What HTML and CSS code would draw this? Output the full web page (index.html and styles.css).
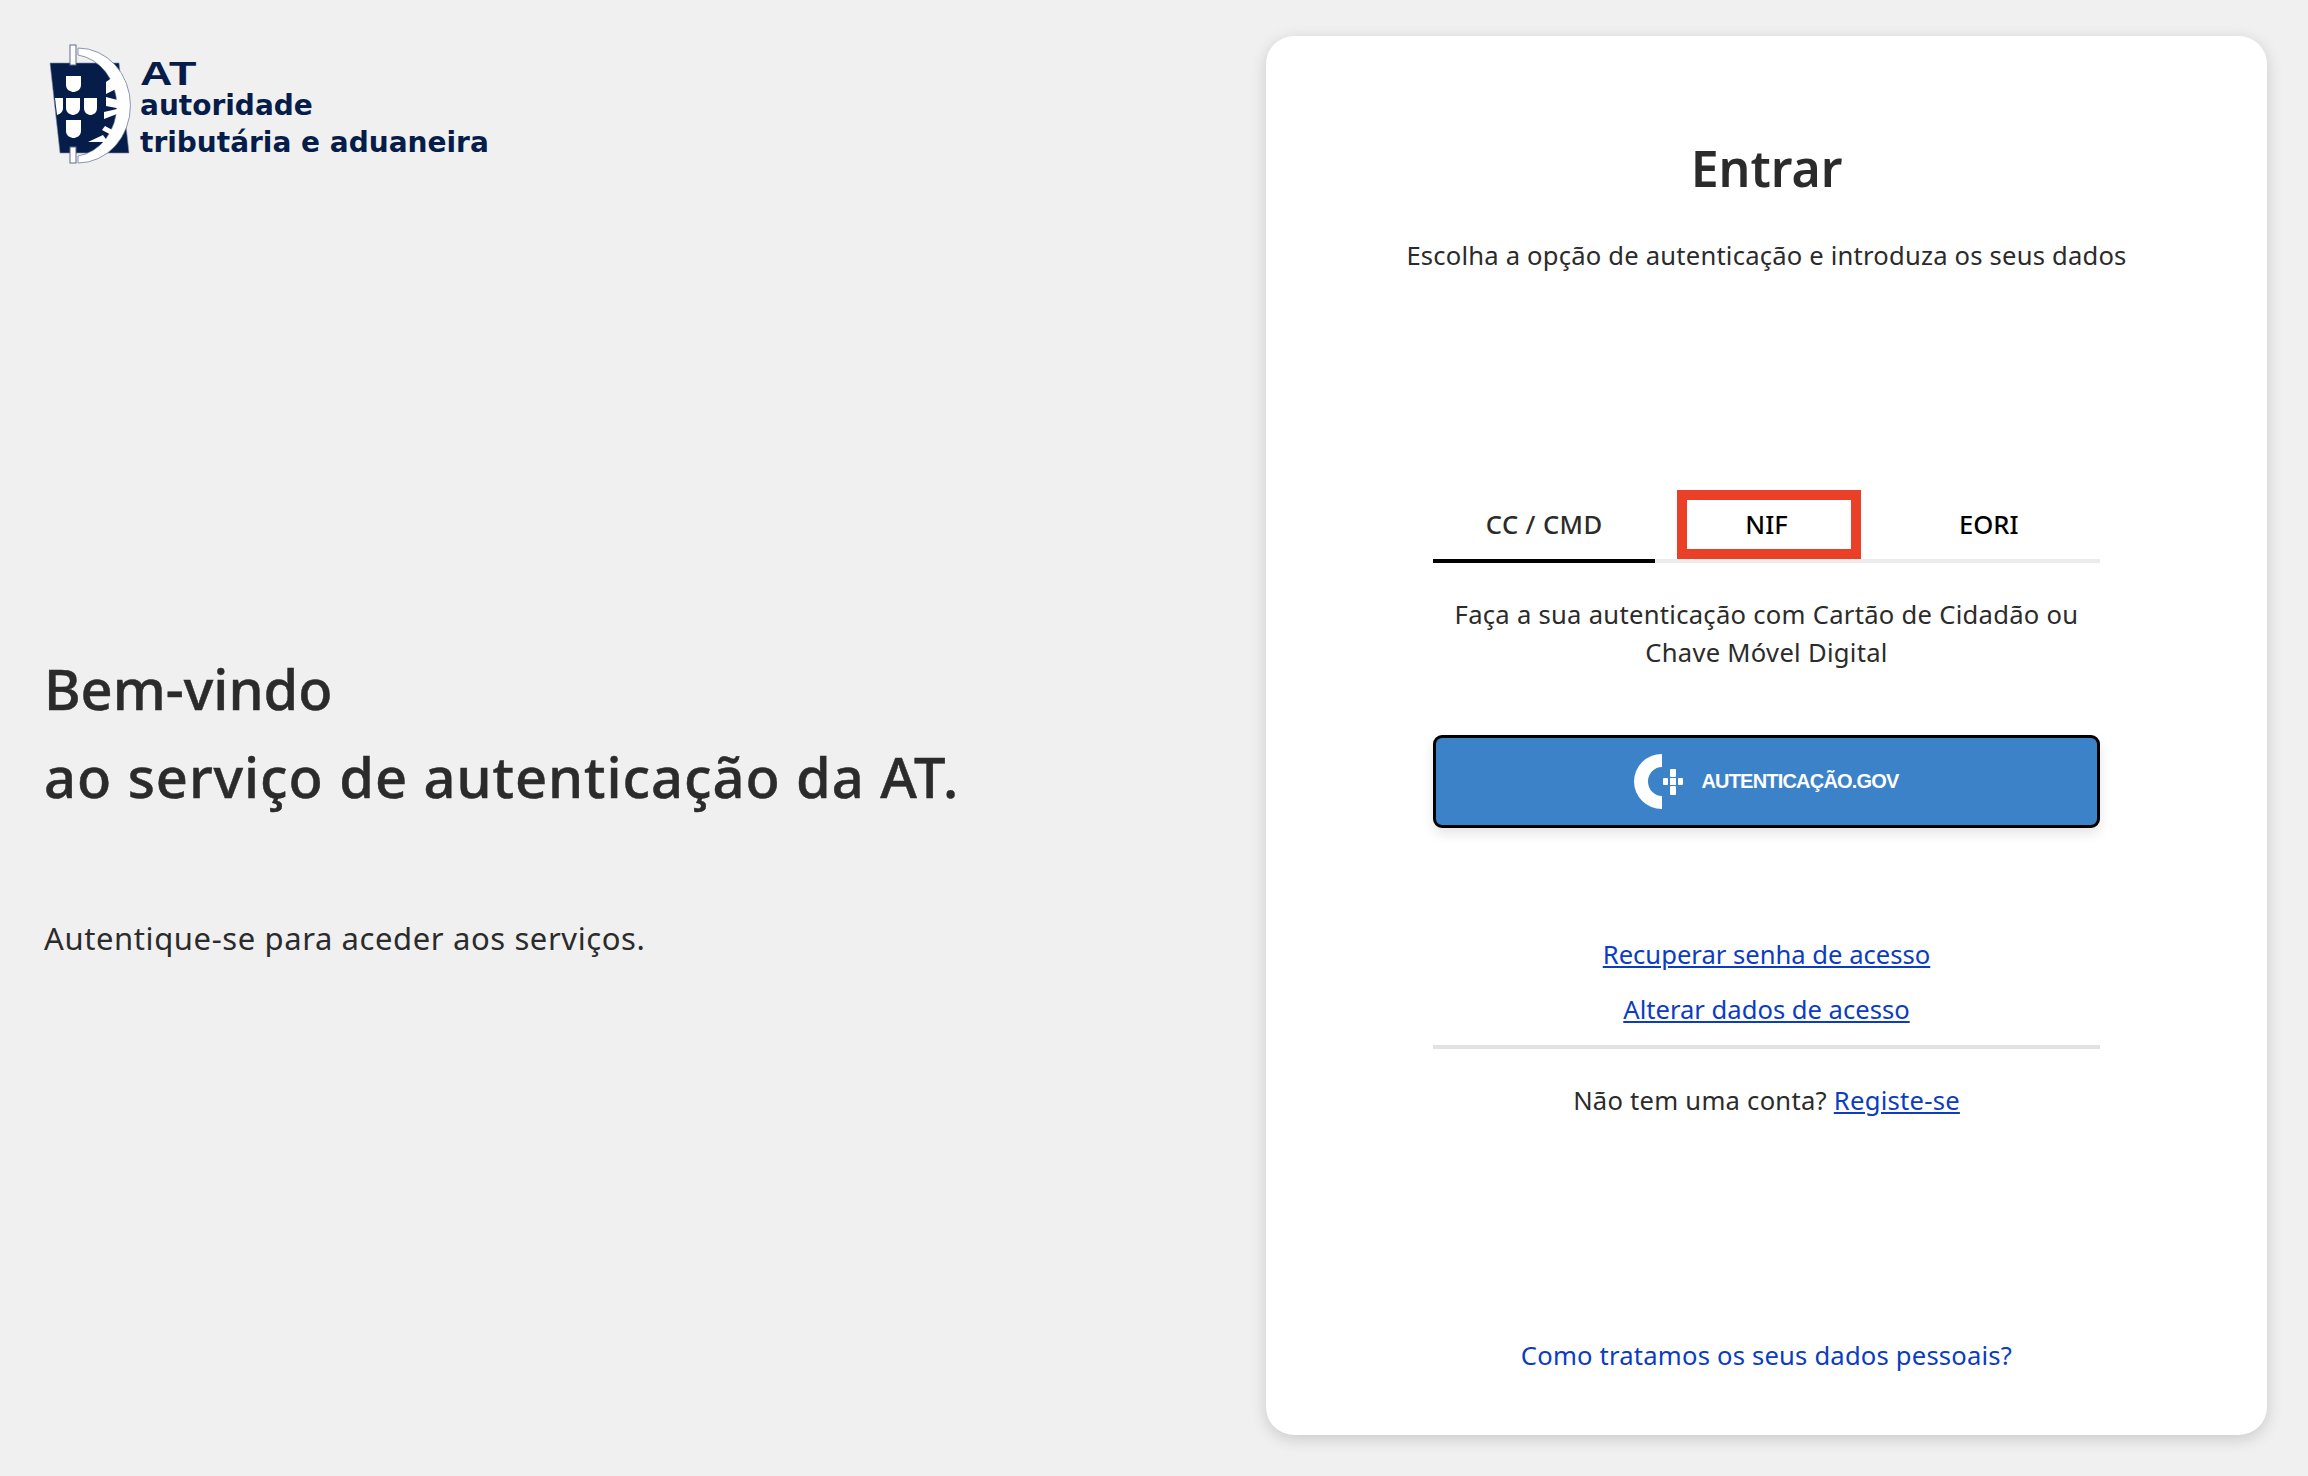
FILE: index.html
```html
<!DOCTYPE html>
<html lang="pt">

<head>
    <meta charset="utf-8">
    <title>Autenticação</title>
    <link rel="stylesheet" href="styles.css">
</head>

<body>
    <div class="page">
        <div class="left">
            <div class="logo">
                <svg class="logo-mark" width="110" height="135" viewBox="0 0 110 135">
                    <polygon points="10,28 79,28 89,118 20,118" fill="#061d49" stroke="#7f8ba6" stroke-width="0.6"/>
                    <!-- outer ring -->
                    <path d="M38 13 A52 57 0 0 1 38 128 V121 A45 51 0 0 0 38 20 Z" fill="#fff" stroke="#5c6a8c" stroke-width="0.7"/>
                    <rect x="30" y="10" width="6" height="20" fill="#fff" stroke="#5c6a8c"/>
                    <rect x="30" y="112" width="6" height="16" fill="#fff" stroke="#5c6a8c"/>
                    <!-- castles -->
                    <polygon points="66,47 80,37 86,49 66,59" fill="#fff"/>
                    <polygon points="66,62 89,68 87,75 66,71" fill="#fff"/>
                    <polygon points="64,77 77,74 77,79 64,84" fill="#fff"/>
                    <polygon points="62,95 65,91 82,100 79,104" fill="#fff"/>
                    <polygon points="48,107 63,100 68,107" fill="#fff"/>
                    <!-- shields -->
                    <path d="M26 41 H41 V50 C41 55 36 57 33.500 57 C31 57 26 55 26 50 Z" fill="#fff"/>
                    <path d="M26 85 H41 V96 C41 101 36 103 33.500 103 C31 103 26 101 26 96 Z" fill="#fff"/>
                    <path d="M26 63 H40 V73 C40 78 35 80 33 80 C31 80 26 78 26 73 Z" fill="#fff"/>
                    <path d="M44 63 H57 V73 C57 78 53 80 50.500 80 C48 80 44 78 44 73 Z" fill="#fff"/>
                    <path d="M15 63 H23 V73 C23 77 20 79 17 80 Z" fill="#fff"/>
                </svg>
                <div class="logo-text">
                    <div class="logo-at">AT</div>
                    <div class="logo-line">autoridade</div>
                    <div class="logo-line logo-line-two">tributária e aduaneira</div>
                </div>
            </div>
            <div class="welcome">
                <h1>Bem-vindo<br><span class="welcome-wide">ao serviço de autenticação da AT.</span></h1>
                <p>Autentique-se para aceder aos serviços.</p>
            </div>
        </div>

        <div class="card">
            <h2>Entrar</h2>
            <p class="subtitle">Escolha a opção de autenticação e introduza os seus dados</p>

            <div class="tabs">
                <div class="tab active">CC / CMD</div>
                <div class="tab">NIF<span class="highlight"></span></div>
                <div class="tab">EORI</div>
            </div>

            <p class="tab-text">Faça a sua autenticação com Cartão de Cidadão ou<br>Chave Móvel Digital</p>

            <button class="gov-button" type="button">
                <svg width="51" height="55" viewBox="0 0 51 55">
                    <path d="M28 0 A28 27.500 0 0 0 28 55 V42 A14 14.500 0 0 1 28 13 Z" fill="#fff"/>
                    <rect x="36" y="15" width="6" height="8" rx="1" fill="#fff"/>
                    <rect x="36" y="32" width="6" height="9" rx="1" fill="#fff"/>
                    <rect x="29" y="24" width="5" height="7" rx="1" fill="#fff"/>
                    <rect x="44" y="24" width="5" height="7" rx="1" fill="#fff"/>
                    <rect x="36" y="24" width="6" height="7" fill="#fff"/>
                </svg>
                <span>AUTENTICAÇÃO.GOV</span>
            </button>

            <div class="links">
                <a href="#">Recuperar senha de acesso</a>
                <a href="#">Alterar dados de acesso</a>
            </div>
            <hr>
            <p class="register">Não tem uma conta? <a href="#">Registe-se</a></p>

            <a class="privacy" href="#">Como tratamos os seus dados pessoais?</a>
        </div>
    </div>
</body>

</html>
```
FILE: styles.css
```css
* {
    box-sizing: border-box;
}

body {
    margin: 0;
    background-color: #f0f0f0;
    font-family: "Noto Sans", Arial, sans-serif;
    color: #2b2b2b;
}

.page {
    display: flex;
    height: 1476px;
    padding: 36px 41px 41px 0;
}

.left {
    flex: 1;
    display: flex;
    flex-direction: column;
}

.logo {
    display: flex;
    align-items: flex-start;
    padding: 0 0 0 40px;
    height: 135px;
    margin-top: -1px;
}

.logo-mark {
    flex: none;
    margin-right: -10px;
}

.logo-text {
    color: #061d49;
    font-family: "DejaVu Sans", sans-serif;
    padding-top: 25px;
}

.logo-at {
    font-family: "Liberation Sans", sans-serif;
    font-weight: bold;
    font-size: 33px;
    line-height: 28px;
    transform: scaleX(1.36);
    transform-origin: left;
}

.logo-line {
    font-size: 28px;
    font-weight: bold;
    line-height: 34px;
    margin-top: 1px;
    white-space: nowrap;
}

.logo-line-two {
    margin-top: 3px;
}

.welcome {
    padding: 474px 0 0 44px;
}

.welcome h1 {
    margin: 0;
    font-size: 56px;
    line-height: 88px;
    font-weight: 500;
    -webkit-text-stroke: 0.5px #2b2b2b;
}

.welcome-wide {
    letter-spacing: 0.95px;
}

.welcome p {
    margin: 98px 0 0;
    font-size: 31px;
    line-height: 40px;
    letter-spacing: 0.6px;
}

.card {
    flex: none;
    width: 1001px;
    background-color: #fff;
    border-radius: 28px;
    box-shadow: 0 4px 16px rgba(0, 0, 0, 0.16);
    padding: 0 167px 0;
    display: flex;
    flex-direction: column;
    align-items: stretch;
    text-align: center;
}

.card h2 {
    margin: 100px 0 0;
    font-size: 50px;
    line-height: 64px;
    font-weight: 600;
}

.subtitle {
    margin: 37px -60px 0;
    font-size: 25.6px;
    line-height: 38px;
    letter-spacing: 0.2px;
}

.tabs {
    display: flex;
    margin-top: 231px;
    border-bottom: 4px solid #ececec;
}

.tab {
    position: relative;
    flex: 1;
    height: 53px;
    font-size: 25.6px;
    line-height: 38px;
    font-weight: 500;
    color: #000;
}

.tab.active {
    color: #2b2b2b;
    letter-spacing: 0.4px;
    box-shadow: 0 4px 0 #000;
}

.highlight {
    position: absolute;
    left: 22px;
    top: -16px;
    width: 184px;
    height: 69px;
    border: 10px solid #ea4027;
}

.tab-text {
    margin: 33px 0 0;
    font-size: 25.6px;
    line-height: 38.4px;
    letter-spacing: 0.28px;
}

.gov-button {
    display: flex;
    align-items: center;
    justify-content: center;
    gap: 16px;
    height: 93px;
    margin-top: 62px;
    background-color: #3b82c8;
    border: 3px solid #000;
    border-radius: 9px;
    box-shadow: 0 6px 12px rgba(0, 0, 0, 0.1);
    color: #fff;
    font-family: "Liberation Sans", sans-serif;
    font-size: 20px;
    font-weight: bold;
    letter-spacing: -0.8px;
}

.links {
    display: flex;
    flex-direction: column;
    gap: 17px;
    margin-top: 108px;
    font-size: 25.6px;
    line-height: 38px;
}

a {
    color: #0b3cc1;
}

hr {
    width: 100%;
    height: 4px;
    margin: 16px 0 0;
    border: none;
    background-color: #e2e2e2;
}

.register {
    margin: 33px 0 0;
    font-size: 25.6px;
    line-height: 38px;
    letter-spacing: 0.25px;
}

.privacy {
    margin-top: auto;
    margin-bottom: 60px;
    font-size: 25.6px;
    line-height: 38px;
    letter-spacing: 0.2px;
    text-decoration: none;
}
```
